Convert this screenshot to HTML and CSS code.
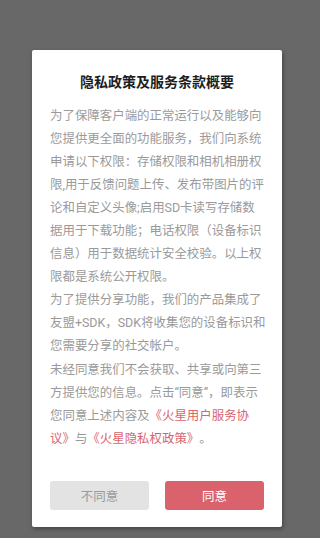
FILE: index.html
```html
<!DOCTYPE html>
<html lang="zh-CN">
<head>
    <meta charset="UTF-8">
    <meta name="viewport" content="width=device-width, initial-scale=1.0">
    <title>隐私政策及服务条款概要</title>
    <link rel="stylesheet" href="styles.css">
</head>
<body>
    <div class="mask">
        <div class="dialog">
            <h1 class="dialog-title">隐私政策及服务条款概要</h1>

            <!-- 按原稿逐行断开 -->
            <div class="dialog-body">
                <p>为了保障客户端的正常运行以及能够向<br>您提供更全面的功能服务，我们向系统<br>申请以下权限：存储权限和相机相册权<br>限,用于反馈问题上传、发布带图片的评<br>论和自定义头像;启用SD卡读写存储数<br>据用于下载功能；电话权限（设备标识<br>信息）用于数据统计安全校验。以上权<br>限都是系统公开权限。</p>
                <p>为了提供分享功能，我们的产品集成了<br>友盟+SDK，SDK将收集您的设备标识和<br>您需要分享的社交帐户。</p>
                <p>未经同意我们不会获取、共享或向第三<br>方提供您的信息。点击“同意”，即表示<br>您同意上述内容及<a href="#" class="link">《火星用户服务协<br>议》</a>与<a href="#" class="link">《火星隐私权政策》</a>。</p>
            </div>

            <div class="dialog-actions">
                <button type="button" class="btn btn-cancel">不同意</button>
                <button type="button" class="btn btn-ok">同意</button>
            </div>
        </div>
    </div>
</body>
</html>
```

FILE: styles.css
```css
html, body {
    margin: 0;
    padding: 0;
}

body {
    background-color: #686868;
    font-family: Roboto, "Noto Sans CJK SC", sans-serif;
    min-height: 538px;
}

.mask {
    padding-top: 50px;
}

.dialog {
    width: 250px;
    margin-left: 32px;
    box-sizing: border-box;
    padding: 22px 18px 17px;
    background-color: #fff;
    border-radius: 2px;
    box-shadow: 1px 2px 4px rgba(0, 0, 0, 0.35);
}

.dialog-title {
    margin: 0 0 11.5px;
    font-size: 14px;
    line-height: 20px;
    font-weight: bold;
    text-align: center;
    color: #1e1e1e;
}

.dialog-body {
    font-size: 12.45px;
    line-height: 23.1px;
    color: #9a9a9a;
    white-space: nowrap;
    text-spacing-trim: space-all;
}

.dialog-body p {
    margin: 0;
}

.link {
    color: #d9646e;
    text-decoration: none;
}

.dialog-actions {
    display: flex;
    gap: 16px;
    margin-top: 31px;
}

.btn {
    flex: 1;
    height: 29px;
    padding: 0;
    border: none;
    border-radius: 3px;
    font-family: inherit;
    font-size: 12.5px;
    cursor: pointer;
}

.btn-cancel {
    background-color: #e3e3e3;
    color: #9a9a9a;
}

.btn-ok {
    background-color: #d9626c;
    color: #fff;
}
```
